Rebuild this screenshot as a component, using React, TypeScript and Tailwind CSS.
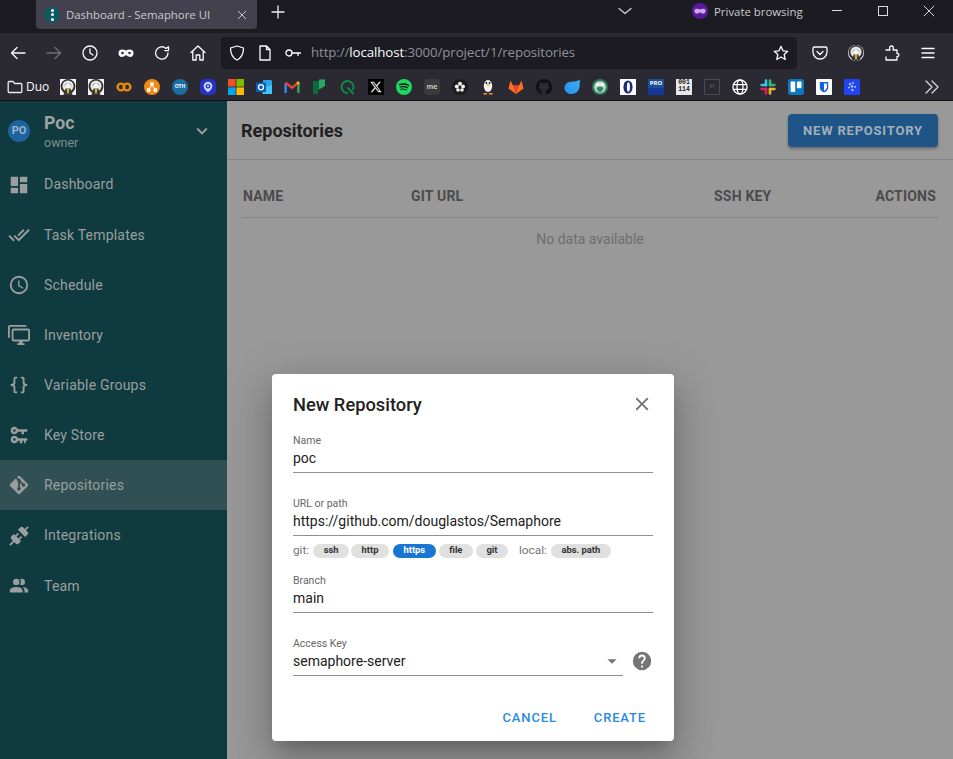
import type { ReactNode } from "react";

type NavItem = { label: string; h: number; path: string; active?: boolean; iconClass?: string };

const navItems: NavItem[] = [
  { label: "Dashboard", h: 51, path: "M13,3V9H21V3M13,21H21V11H13M3,21H11V15H3M3,13H11V3H3V13Z" },
  { label: "Task Templates", h: 50, path: "M0.41,13.41L6,19L7.41,17.58L1.83,12M22.24,5.58L11.66,16.17L7.5,12L6.07,13.41L11.66,19L23.66,7M18,7L16.59,5.58L10.24,11.93L11.66,13.34L18,7Z" },
  { label: "Schedule", h: 50, path: "M12,20A8,8 0 0,0 20,12A8,8 0 0,0 12,4A8,8 0 0,0 4,12A8,8 0 0,0 12,20M12,2A10,10 0 0,1 22,12A10,10 0 0,1 12,22C6.47,22 2,17.5 2,12A10,10 0 0,1 12,2M12.5,7V12.25L17,14.92L16.25,16.15L11,13V7H12.5Z" },
  { label: "Inventory", h: 50, path: "M22,17V7H6V17H22M22,5A2,2 0 0,1 24,7V17C24,18.11 23.1,19 22,19H16V21H18V23H10V21H12V19H6C4.89,19 4,18.11 4,17V7A2,2 0 0,1 6,5H22M2,3V15H0V3A2,2 0 0,1 2,1H20V3H2Z" },
  { label: "Variable Groups", h: 50, path: "M8,3A2,2 0 0,0 6,5V9A2,2 0 0,1 4,11H3V13H4A2,2 0 0,1 6,15V19A2,2 0 0,0 8,21H10V19H8V14A2,2 0 0,0 6,12A2,2 0 0,0 8,10V5H10V3M16,3A2,2 0 0,1 18,5V9A2,2 0 0,0 20,11H21V13H20A2,2 0 0,0 18,15V19A2,2 0 0,1 16,21H14V19H16V14A2,2 0 0,1 18,12A2,2 0 0,1 16,10V5H14V3H16Z" },
  { label: "Key Store", h: 50, iconClass: "h-5 w-5 mx-px", path: "M6.5,2C8.46,2 10.13,3.25 10.74,5H22V8H18V11H15V8H10.74C10.13,9.75 8.46,11 6.5,11C4,11 2,9 2,6.5C2,4 4,2 6.5,2M6.5,5A1.5,1.5 0 0,0 5,6.5A1.5,1.5 0 0,0 6.5,8A1.5,1.5 0 0,0 8,6.5A1.5,1.5 0 0,0 6.5,5M6.5,13C8.46,13 10.13,14.25 10.74,16H22V19H20V22H18V19H16V22H13V19H10.74C10.13,20.75 8.46,22 6.5,22C4,22 2,20 2,17.5C2,15 4,13 6.5,13M6.5,16A1.5,1.5 0 0,0 5,17.5A1.5,1.5 0 0,0 6.5,19A1.5,1.5 0 0,0 8,17.5A1.5,1.5 0 0,0 6.5,16Z" },
  { label: "Repositories", h: 50, active: true, path: "M2.6,10.59L8.38,4.8L10.07,6.5C9.83,7.35 10.22,8.28 11,8.73V14.27C10.4,14.61 10,15.26 10,16A2,2 0 0,0 12,18A2,2 0 0,0 14,16C14,15.26 13.6,14.61 13,14.27V9.41L15.07,11.5C15,11.65 15,11.82 15,12A2,2 0 0,0 17,14A2,2 0 0,0 19,12A2,2 0 0,0 17,10C16.82,10 16.65,10 16.5,10.07L13.93,7.5C14.19,6.57 13.71,5.55 12.78,5.16C12.35,5 11.9,4.96 11.5,5.07L9.8,3.38L10.59,2.6C11.37,1.81 12.63,1.81 13.41,2.6L21.4,10.59C22.19,11.37 22.19,12.63 21.4,13.41L13.41,21.4C12.63,22.19 11.37,22.19 10.59,21.4L2.6,13.41C1.81,12.63 1.81,11.37 2.6,10.59Z" },
  { label: "Integrations", h: 51, path: "M21.4 7.5C22.2 8.3 22.2 9.6 21.4 10.3L18.6 13.1L10.8 5.3L13.6 2.5C14.4 1.7 15.7 1.7 16.4 2.5L18.2 4.3L21.2 1.3L22.6 2.7L19.6 5.7L21.4 7.5M15.6 13.3L14.2 11.9L11.4 14.7L9.3 12.6L12.1 9.8L10.7 8.4L7.9 11.2L6.4 9.8L3.6 12.6C2.8 13.4 2.8 14.7 3.6 15.4L5.4 17.2L1.4 21.2L2.8 22.6L6.8 18.6L8.6 20.4C9.4 21.2 10.7 21.2 11.4 20.4L14.2 17.6L12.8 16.2L15.6 13.3Z" },
  { label: "Team", h: 50, path: "M16 17V19H2V17S2 13 9 13 16 17 16 17M12.5 7.5A3.5 3.5 0 1 0 9 11A3.5 3.5 0 0 0 12.5 7.5M15.94 13A5.32 5.32 0 0 1 18 17V19H22V17S22 13.37 15.94 13M15 4A3.39 3.39 0 0 0 13.07 4.59A5 5 0 0 1 13.07 10.41A3.39 3.39 0 0 0 15 11A3.5 3.5 0 0 0 15 4Z" },
];

function Mdi({ path, className }: { path: string; className?: string }) {
  return (
    <svg viewBox="0 0 24 24" className={className} fill="currentColor">
      <path d={path} />
    </svg>
  );
}

function Line({ children, className }: { children: ReactNode; className?: string }) {
  return (
    <svg viewBox="0 0 16 16" className={className} fill="none" stroke="currentColor" strokeWidth="1.3" strokeLinecap="round" strokeLinejoin="round">
      {children}
    </svg>
  );
}

function Penguin({ className }: { className?: string }) {
  return (
    <svg viewBox="0 0 16 16" className={className ?? "w-4 h-4"}>
      <rect width="16" height="16" fill="#f2f2f2" />
      <circle cx="8" cy="7.5" r="7.4" fill="#2e2e2e" />
      <circle cx="8" cy="7" r="5.6" fill="#e6e6e6" />
      <path d="M4.6 7.5 C4.6 3 11.4 3 11.4 7.5 L10.4 5.6 H5.6Z" fill="#222" />
      <ellipse cx="8" cy="6.6" rx="2.3" ry="2.5" fill="#f4f4f4" />
      <path d="M3.4 16 L5.6 9.6 H10.4 L12.6 16Z" fill="#3a3a3a" />
      <path d="M6.6 9.4 H9.4 L8.7 14.6 H7.3Z" fill="#d6b640" />
    </svg>
  );
}

const favicons: ReactNode[] = [
  <Penguin />,
  <Penguin />,
  <svg viewBox="0 0 16 16" className="w-4 h-4" fill="none" stroke="#e8890c" strokeWidth="2.4">
    <circle cx="5" cy="8" r="3.4" />
    <circle cx="11" cy="8" r="3.4" />
  </svg>,
  <svg viewBox="0 0 16 16" className="w-4 h-4">
    <circle cx="8" cy="8" r="8" fill="#f08a16" />
    <rect x="6.3" y="3.4" width="3.4" height="3.4" fill="#fff" />
    <rect x="3" y="9.4" width="3.4" height="3.4" fill="#fff" />
    <rect x="9.6" y="9.4" width="3.4" height="3.4" fill="#fff" />
    <path d="M8 6.5 L4.7 10 M8 6.5 L11.3 10" stroke="#fff" strokeWidth="1" />
  </svg>,
  <span className="flex w-4 h-4 items-center justify-center rounded-full bg-[#1b6ea3] text-[5px] font-bold text-white">OTH</span>,
  <svg viewBox="0 0 16 16" className="w-4 h-4">
    <rect width="16" height="16" rx="5" fill="#2433c4" />
    <path d="M8 2.8a4.4 4.4 0 0 1 4.4 4.4C12.4 10 8 13.4 8 13.4S3.6 10 3.6 7.2A4.4 4.4 0 0 1 8 2.8Z" fill="#c8cff5" />
    <circle cx="8" cy="7.2" r="2.3" fill="#2433c4" />
    <circle cx="8" cy="7.2" r="1.1" fill="#c8cff5" />
  </svg>,
  <svg viewBox="0 0 16 16" className="w-4 h-4">
    <rect width="7.6" height="7.6" fill="#f25022" />
    <rect x="8.4" width="7.6" height="7.6" fill="#7fba00" />
    <rect y="8.4" width="7.6" height="7.6" fill="#00a4ef" />
    <rect x="8.4" y="8.4" width="7.6" height="7.6" fill="#ffb900" />
  </svg>,
  <svg viewBox="0 0 16 16" className="w-4 h-4">
    <path d="M7 1 H15 L16 2 V14 L15 15 H7Z" fill="#28a8ea" />
    <path d="M8 9 L16 6 V15 H6Z" fill="#50d9ff" opacity=".65" />
    <rect y="3.5" width="10" height="9.5" rx="1" fill="#0a5fb4" />
    <circle cx="5" cy="8.2" r="2.5" fill="none" stroke="#fff" strokeWidth="1.3" />
  </svg>,
  <svg viewBox="0 0 16 16" className="w-4 h-4" fill="none" strokeWidth="2.4">
    <path d="M1.6 14 V4" stroke="#4285f4" />
    <path d="M14.4 14 V4" stroke="#34a853" />
    <path d="M1.6 3.6 L8 8.8 L14.4 3.6" stroke="#ea4335" />
    <path d="M13.2 2.8 L15 5" stroke="#fbbc04" />
  </svg>,
  <svg viewBox="0 0 16 16" className="w-4 h-4">
    <path d="M1 2 H8 V10 H6 V15 H1Z" fill="#0b6b3a" />
    <path d="M7 0.5 H13 V7 L7 10.5Z" fill="#2aa866" />
  </svg>,
  <svg viewBox="0 0 16 16" className="w-4 h-4" fill="none" stroke="#0f8a46" strokeWidth="2">
    <path d="M12.6 11.2 A6 6 0 1 0 8 14" />
    <path d="M7.5 8.5 L13.5 15" />
  </svg>,
  <svg viewBox="0 0 16 16" className="w-4 h-4">
    <rect width="16" height="16" fill="#000" />
    <g transform="translate(1.6 1.6) scale(0.53)">
      <path fill="#e8e8e8" d="M18.244 2.25h3.308l-7.227 8.26 8.502 11.24H16.17l-5.214-6.817L4.99 21.75H1.68l7.73-8.835L1.254 2.25H8.08l4.713 6.231zm-1.161 17.52h1.833L7.084 4.126H5.117z" />
    </g>
  </svg>,
  <svg viewBox="0 0 16 16" className="w-4 h-4" fill="none" stroke="#111" strokeLinecap="round">
    <circle cx="8" cy="8" r="8" fill="#1ed760" stroke="none" />
    <path d="M3.6 5.6 C6.5 4.8 9.8 5 12.4 6.4" strokeWidth="1.5" />
    <path d="M4.2 8 C6.6 7.4 9.4 7.6 11.6 8.8" strokeWidth="1.2" />
    <path d="M4.6 10.3 C6.6 9.8 8.8 10 10.6 11" strokeWidth="1" />
  </svg>,
  <span className="flex w-4 h-4 items-center justify-center rounded-[4px] bg-[#3a3a3a] text-[7px] font-bold leading-none text-[#c4c4c4]">me</span>,
  <svg viewBox="0 0 16 16" className="w-4 h-4">
    <circle cx="8" cy="8" r="8" fill="#1c1c1c" />
    <circle cx="8" cy="4.8" r="2" fill="#eee" />
    <circle cx="4.8" cy="7.6" r="2" fill="#eee" />
    <circle cx="11" cy="7.6" r="2" fill="#eee" />
    <circle cx="6" cy="11" r="1.8" fill="#eee" />
    <circle cx="10" cy="11" r="1.8" fill="#eee" />
  </svg>,
  <svg viewBox="0 0 16 16" className="w-4 h-4">
    <ellipse cx="8" cy="7" rx="4.2" ry="6" fill="#f3f3f3" />
    <circle cx="6.4" cy="4" r=".9" fill="#111" />
    <circle cx="9.6" cy="4" r=".9" fill="#111" />
    <path d="M6.2 5.6 H9.8 L8 7.4Z" fill="#f09a1a" />
    <path d="M3.4 14 H7 V15.6 H3.4Z M9 14 H12.6 V15.6 H9Z" fill="#f09a1a" />
  </svg>,
  <svg viewBox="0 0 16 16" className="w-4 h-4">
    <path d="M8 15 L0.4 9.4 L2.6 1.4 L5 6.6 H11 L13.4 1.4 L15.6 9.4Z" fill="#fc6d26" />
    <path d="M8 15 L5 6.6 H11Z" fill="#e24329" />
  </svg>,
  <svg viewBox="0 0 16 16" className="w-4 h-4">
    <path fill="#111" d="M8 0C3.58 0 0 3.58 0 8c0 3.54 2.29 6.53 5.47 7.59.4.07.55-.17.55-.38 0-.19-.01-.82-.01-1.49-2.01.37-2.53-.49-2.69-.94-.09-.23-.48-.94-.82-1.13-.28-.15-.68-.52-.01-.53.63-.01 1.08.58 1.23.82.72 1.21 1.87.87 2.33.66.07-.52.28-.87.51-1.07-1.78-.2-3.64-.89-3.64-3.95 0-.87.31-1.59.82-2.15-.08-.2-.36-1.02.08-2.12 0 0 .67-.21 2.2.82.64-.18 1.32-.27 2-.27s1.36.09 2 .27c1.53-1.04 2.2-.82 2.2-.82.44 1.1.16 1.92.08 2.12.51.56.82 1.27.82 2.15 0 3.07-1.87 3.75-3.65 3.95.29.25.54.73.54 1.48 0 1.07-.01 1.93-.01 2.2 0 .21.15.46.55.38A8.01 8.01 0 0 0 16 8c0-4.42-3.58-8-8-8z" />
  </svg>,
  <svg viewBox="0 0 16 16" className="w-4 h-4">
    <defs>
      <linearGradient id="drop" x1="0" y1="1" x2="1" y2="0">
        <stop offset="0" stopColor="#2b8be8" />
        <stop offset="1" stopColor="#37b4f0" />
      </linearGradient>
    </defs>
    <path d="M16 0.5 C15.5 5 16 8 14.5 11 C12.5 15 6.5 16.5 2.8 13.6 C-0.6 10.8 -0.2 6 3.5 3.8 C7 1.8 12 3.6 16 0.5Z" fill="url(#drop)" />
  </svg>,
  <svg viewBox="0 0 16 16" className="w-4 h-4">
    <circle cx="8" cy="8" r="8" fill="#2a7a56" />
    <circle cx="8" cy="8" r="6" fill="#b9d6c6" />
    <circle cx="6" cy="5.6" r="1.7" fill="#fff" />
    <circle cx="10" cy="5.6" r="1.7" fill="#fff" />
    <path d="M4.6 9 C6 7.4 10 7.4 11.4 9 C10.6 12 9 13 8 13 C7 13 5.4 12 4.6 9Z" fill="#2f8660" />
  </svg>,
  <svg viewBox="0 0 16 16" className="w-4 h-4">
    <rect width="16" height="16" fill="#fff" />
    <ellipse cx="8" cy="8" rx="4.6" ry="6.6" fill="#1c2a78" />
    <ellipse cx="8.4" cy="8" rx="1.5" ry="4.8" fill="#fff" />
  </svg>,
  <span className="flex flex-col w-4 h-4">
    <span className="h-[9px] bg-[#1d4f94] text-[6px] font-bold leading-[9px] text-white text-center">PRO</span>
    <span className="h-[7px] bg-[#12389a]" />
  </span>,
  <span className="flex flex-col w-4 h-4 items-center bg-[#e8e8e8] font-['Liberation_Mono',monospace] text-[6.5px] font-bold leading-[7px] text-[#222]">
    <span>001</span>
    <span>114</span>
  </span>,
  <span className="flex w-4 h-4 items-center justify-center rounded-[1px] border border-[#4c4c4c] text-[6px] font-bold text-[#4c4c4c]">#!</span>,
  <Line className="w-4 h-4 text-white">
    <circle cx="8" cy="8" r="7" />
    <ellipse cx="8" cy="8" rx="3" ry="7" />
    <path d="M1.4 5.6 H14.6 M1.4 10.4 H14.6" />
  </Line>,
  <svg viewBox="0 0 16 16" className="w-4 h-4" fill="none" strokeWidth="2.6" strokeLinecap="round">
    <path d="M6 1.6 V6.2" stroke="#36c5f0" />
    <path d="M1.6 6 H6" stroke="#36c5f0" />
    <path d="M10 1.6 V6.2" stroke="#2eb67d" />
    <path d="M10 6 H14.4" stroke="#2eb67d" />
    <path d="M10 10 V14.4" stroke="#ecb22e" />
    <path d="M10 10 H14.4" stroke="#ecb22e" />
    <path d="M6 10 V14.4" stroke="#e01e5a" />
    <path d="M1.6 10 H6" stroke="#e01e5a" />
  </svg>,
  <svg viewBox="0 0 16 16" className="w-4 h-4">
    <rect width="16" height="16" rx="2.5" fill="#0a79bf" />
    <rect x="2.6" y="2.6" width="4.6" height="10.4" rx=".8" fill="#fff" />
    <rect x="8.9" y="2.6" width="4.6" height="6.6" rx=".8" fill="#fff" />
  </svg>,
  <svg viewBox="0 0 16 16" className="w-4 h-4">
    <rect width="16" height="16" rx="1" fill="#fff" />
    <path d="M3.8 3 H12.2 V8.4 C12.2 11 9.8 12.6 8 13.4 C6.2 12.6 3.8 11 3.8 8.4Z" fill="#175ddc" />
    <path d="M8 4.4 H10.9 V8.3 C10.9 9.9 9.3 11.1 8 11.8Z" fill="#fff" />
  </svg>,
  <svg viewBox="0 0 16 16" className="w-4 h-4">
    <rect width="16" height="16" rx="1.5" fill="#2244f0" />
    <g fill="#a9bcff">
      <circle cx="6" cy="5" r="1.2" />
      <circle cx="9" cy="4" r="1" />
      <circle cx="8" cy="7.4" r="1.3" />
      <circle cx="5" cy="8.5" r="1" />
      <circle cx="11" cy="7.8" r="1.1" />
      <circle cx="8.4" cy="11" r="1.2" />
    </g>
  </svg>,
];

function Field({ label, value, className, children }: { label: string; value: string; className?: string; children?: ReactNode }) {
  return (
    <div className={className}>
      <div className="h-[15px] text-[10.5px] leading-[15px] text-[#666]">{label}</div>
      <div className="h-[25px] border-b border-[#8f8f8f] text-[14px] leading-[21px] text-[#212121]">{value}</div>
      {children}
    </div>
  );
}

function Chip({ label, active, className }: { label: string; active?: boolean; className?: string }) {
  return (
    <span className={`flex h-[14px] items-center rounded-full px-[10.5px] text-[9.4px] font-bold ${active ? "bg-[#1976d2] text-white" : "bg-[#e0e0e0] text-[#333]"} ${className ?? ""}`}>
      {label}
    </span>
  );
}

function BrowserChrome() {
  return (
    <div className="shrink-0 font-['Open_Sans',sans-serif]">
      <div className="flex h-[33px] items-start bg-[#1c1b22] text-[#d3d3d6]">
        <div className="ml-9 flex h-[29px] w-[221px] items-center rounded-b-[4px] bg-[#42414d] pl-2 pr-2">
          <span className="flex h-4 w-4 flex-col items-center justify-center gap-[1.5px] rounded-full bg-[#0f5a60]">
            <i className="h-[3px] w-[3px] rounded-full bg-white" />
            <i className="h-[3px] w-[3px] rounded-full bg-white" />
            <i className="h-[3px] w-[3px] rounded-full bg-white" />
          </span>
          <span className="ml-[6px] text-[11.4px] text-[#c9c9ce]">Dashboard - Semaphore UI</span>
          <Line className="ml-auto mr-[1px] h-3 w-3 text-[#c9c9ce]">
            <path d="M3 3 L13 13 M13 3 L3 13" />
          </Line>
        </div>
        <Line className="ml-[13px] mt-[4px] h-4 w-4 text-[#eee]">
          <path d="M8 2 V14 M2 8 H14" />
        </Line>
        <Line className="ml-[331px] mt-[3px] h-4 w-4 text-[#ccc]">
          <path d="M2 5.5 L8 10.5 L14 5.5" />
        </Line>
        <svg viewBox="0 0 16 16" className="ml-[59px] mt-[3px] h-4 w-4">
          <circle cx="8" cy="8" r="8" fill="#5b1a9c" />
          <path d="M2.5 6.5 C4.5 5 6.8 6.2 8 6.6 C9.2 6.2 11.5 5 13.5 6.5 C14 9 12.8 11 10.8 10.6 C9.5 10.4 9 9.4 8 9.4 C7 9.4 6.5 10.4 5.2 10.6 C3.2 11 2 9 2.5 6.5Z" fill="#c7a6ee" />
        </svg>
        <span className="ml-[6px] mt-[3px] w-[88px] whitespace-nowrap text-[11.4px] leading-[18px] text-[#c9c9ce]">Private browsing</span>
        <span className="ml-[30px] mt-[10px] h-px w-[10px] bg-[#ddd]" />
        <span className="ml-[36px] mt-[6px] h-[10px] w-[10px] border border-[#ddd]" />
        <Line className="ml-[35px] mt-[5px] h-3 w-3 text-[#ddd]">
          <path d="M1.5 1.5 L14.5 14.5 M14.5 1.5 L1.5 14.5" />
        </Line>
      </div>
      <div className="flex h-[40px] items-center bg-[#2b2a33] text-[#fbfbfe]">
        <Line className="ml-[10px] h-4 w-4">
          <path d="M15 8 H1.5 M7 2.5 L1.5 8 L7 13.5" />
        </Line>
        <Line className="ml-[20px] h-4 w-4 text-[#6f6e76]">
          <path d="M1 8 H14.5 M9 2.5 L14.5 8 L9 13.5" />
        </Line>
        <Line className="ml-[20px] h-4 w-4">
          <circle cx="8" cy="8" r="7" />
          <path d="M8 4 V8 L11 10" />
        </Line>
        <svg viewBox="0 0 16 16" className="ml-[20px] h-4 w-4" fill="#fbfbfe" fillRule="evenodd">
          <path d="M0.5 7.5 C1 3.8 5 3.8 8 5.6 C11 3.8 15 3.8 15.5 7.5 C16 11 13 13 10.5 11.6 C9.3 10.9 8.6 10.2 8 10.2 C7.4 10.2 6.7 10.9 5.5 11.6 C3 13 0 11 0.5 7.5Z M3.2 8 A1.3 1.3 0 0 0 5.8 8 A1.3 1.3 0 0 0 3.2 8Z M10.2 8 A1.3 1.3 0 0 0 12.8 8 A1.3 1.3 0 0 0 10.2 8Z" />
        </svg>
        <Line className="ml-[20px] h-4 w-4">
          <path d="M14 8 A6.2 6.2 0 1 1 12 3.4 L14.5 1.8 V5.6 H10.8" />
        </Line>
        <Line className="ml-[20px] h-4 w-4">
          <path d="M1 7.5 L8 1 L15 7.5 M2.8 6 V15 H6.2 V10 H9.8 V15 H13.2 V6" />
        </Line>
        <div className="ml-[15px] flex h-8 w-[576px] items-center rounded-[4px] bg-[#1c1b22] pl-2 pr-[8px]">
          <Line className="h-4 w-4">
            <path d="M8 1 L14.5 3 C14.5 8 13 12.5 8 15 C3 12.5 1.5 8 1.5 3Z" />
          </Line>
          <Line className="ml-[12px] h-4 w-4">
            <path d="M3 1 H9.5 L13 4.5 V15 H3Z M9.5 1 V4.5 H13" />
          </Line>
          <Line className="ml-[12px] h-4 w-4">
            <circle cx="4" cy="8" r="3" />
            <path d="M7 8 H15.5 M13 8 V10.5" />
          </Line>
          <span className="ml-[10px] text-[13.3px] tracking-[-0.1px] text-[#8f8f99]">
            http://<span className="text-[#fbfbfe]">localhost</span>:3000/project/1/repositories
          </span>
          <Line className="ml-auto h-4 w-4">
            <path d="M8 1.3 L10 5.8 L14.8 6.3 L11.2 9.6 L12.2 14.5 L8 12 L3.8 14.5 L4.8 9.6 L1.2 6.3 L6 5.8Z" />
          </Line>
        </div>
        <Line className="ml-[15px] h-4 w-4">
          <path d="M2.5 2 H13.5 A1.5 1.5 0 0 1 15 3.5 V7 A7 7 0 0 1 1 7 V3.5 A1.5 1.5 0 0 1 2.5 2Z M5 6.5 L8 9.5 L11 6.5" />
        </Line>
        <span className="ml-[20px] h-4 w-4 overflow-hidden rounded-full">
          <Penguin />
        </span>
        <Line className="ml-[20px] h-4 w-4">
          <path d="M2 5 H6 C5 2.5 6 1 7.5 1 C9 1 10 2.5 9 5 H13 V8.5 C15.5 7.8 15.5 12 13 11.5 V15 H2 V12" />
        </Line>
        <Line className="ml-[20px] h-4 w-4">
          <path d="M2 3.5 H14 M2 8 H14 M2 12.5 H14" />
        </Line>
      </div>
      <div className="flex h-[27px] items-center bg-[#2b2a33]">
        <Line className="ml-[7px] h-4 w-4 text-[#ececec]">
          <path d="M1.2 3.5 A1 1 0 0 1 2.2 2.5 H6 L7.8 4.5 H13.8 A1 1 0 0 1 14.8 5.5 V12.5 A1 1 0 0 1 13.8 13.5 H2.2 A1 1 0 0 1 1.2 12.5Z" />
        </Line>
        <span className="ml-[3px] w-[26px] text-[12px] text-[#fbfbfe]">Duo</span>
        <div className="ml-[8px] flex items-center gap-3">
          {favicons.map((icon, i) => (
            <span key={i} className="h-4 w-4 shrink-0">
              {icon}
            </span>
          ))}
        </div>
        <Line className="ml-auto mr-[13px] h-4 w-4 text-[#d8d8d8]">
          <path d="M2 2 L8 8 L2 14 M8 2 L14 8 L8 14" />
        </Line>
      </div>
    </div>
  );
}

function Sidebar() {
  return (
    <aside className="w-[227px] shrink-0 bg-[#0f3b40] text-[#9a9e9e]">
      <div className="flex h-[58px] items-start">
        <div className="ml-2 mt-[19px] flex h-[22px] w-[22px] items-center justify-center rounded-full bg-[#1d639f] text-[11px] font-bold text-[#9ab4c9]">PO</div>
        <div className="ml-[14px] mt-[10px]">
          <div className="text-[17.6px] font-bold leading-[24px] text-[#a0a3a3]">Poc</div>
          <div className="text-[12.5px] leading-[16px] text-[#7e8e8f]">owner</div>
        </div>
        <Mdi path="M7.41,8.58L12,13.17L16.59,8.58L18,10L12,16L6,10L7.41,8.58Z" className="ml-auto mr-[14px] mt-[19px] h-[22px] w-[22px]" />
      </div>
      {navItems.map((item) => (
        <div key={item.label} className={`flex items-center pl-2 ${item.active ? "bg-[#305053]" : ""}`} style={{ height: item.h }}>
          <Mdi path={item.path} className={`shrink-0 ${item.iconClass ?? "h-[22px] w-[22px]"}`} />
          <span className="ml-[14px] text-[14px] tracking-[0.2px]">{item.label}</span>
        </div>
      ))}
    </aside>
  );
}

function Content() {
  return (
    <main className="flex-1 bg-[#999999]">
      <div className="flex h-[59px] items-center border-b border-[#858585] pl-[14px] pr-[15px]">
        <h1 className="text-[18px] font-bold text-[#1f1f1f]">Repositories</h1>
        <button className="ml-auto mt-px flex h-[33px] w-[150px] items-center justify-center rounded-[4px] bg-[#1f5487] text-[13px] font-bold tracking-[0.8px] text-[#a3aeb9] shadow-[0_2px_3px_rgba(0,0,0,0.3)]">
          NEW REPOSITORY
        </button>
      </div>
      <div className="mx-[14px] mt-[16px]">
        <div className="grid h-[42px] grid-cols-[168px_303px_1fr_auto] items-center border-b border-[#858585] pl-[2px] pr-[3px] text-[14px] font-bold tracking-[0.2px] text-[#4b4b4b]">
          <span>NAME</span>
          <span>GIT URL</span>
          <span>SSH KEY</span>
          <span>ACTIONS</span>
        </div>
        <div className="h-[42px] text-center text-[14px] leading-[42px] text-[#6e6e6e]">No data available</div>
      </div>
    </main>
  );
}

function Dialog() {
  return (
    <div className="absolute left-[272px] top-[374px] h-[367px] w-[402px] rounded-[4px] bg-white px-[21px] shadow-[0_11px_15px_-7px_rgba(0,0,0,0.2),0_24px_38px_3px_rgba(0,0,0,0.14),0_9px_46px_8px_rgba(0,0,0,0.12)]">
      <div className="flex h-[60px] items-center pt-[2px]">
        <h2 className="text-[18.3px] font-medium text-[#212121]">New Repository</h2>
        <Mdi path="M19,6.41L17.59,5L12,10.59L6.41,5L5,6.41L10.59,12L5,17.59L6.41,19L12,13.41L17.59,19L19,17.59L13.41,12L19,6.41Z" className="ml-auto mb-[2px] h-[22px] w-[22px] text-[#757575]" />
      </div>
      <Field label="Name" value="poc" className="-mt-px" />
      <Field label="URL or path" value="https://github.com/douglastos/Semaphore" className="mt-[23px]" />
      <div className="mt-[7px] flex h-[15px] items-center text-[11.8px] text-[#757575]">
        <span>git:</span>
        <Chip label="ssh" className="ml-1" />
        <Chip label="http" className="ml-[2px]" />
        <Chip label="https" active className="ml-1" />
        <Chip label="file" className="ml-[3px]" />
        <Chip label="git" className="ml-[3px]" />
        <span className="ml-[11px]">local:</span>
        <Chip label="abs. path" className="ml-1" />
      </div>
      <Field label="Branch" value="main" className="mt-[15px]" />
      <div className="mt-[23px] flex items-start">
        <Field label="Access Key" value="semaphore-server" className="relative w-[330px]">
          <Mdi path="M7,10L12,15L17,10H7Z" className="absolute right-0 top-[14px] h-[22px] w-[22px] text-[#757575]" />
        </Field>
        <Mdi path="M15.07,11.25L14.17,12.17C13.45,12.89 13,13.5 13,15H11V14.5C11,13.39 11.45,12.39 12.17,11.67L13.41,10.41C13.78,10.05 14,9.55 14,9C14,7.89 13.1,7 12,7A2,2 0 0,0 10,9H8A4,4 0 0,1 12,5A4,4 0 0,1 16,9C16,9.88 15.64,10.67 15.07,11.25M13,19H11V17H13M12,2A10,10 0 0,0 2,12A10,10 0 0,0 12,22A10,10 0 0,0 22,12C22,6.47 17.5,2 12,2Z" className="ml-[8px] mt-[14px] h-[22px] w-[22px] text-[#757575]" />
      </div>
      <div className="mt-[32px] flex justify-end gap-[37px] pr-[7px] text-[13px] font-medium tracking-[0.85px] text-[#2a8ae0]">
        <span>CANCEL</span>
        <span>CREATE</span>
      </div>
    </div>
  );
}

export default function App() {
  return (
    <div className="relative flex h-[759px] w-[953px] flex-col overflow-hidden font-['Roboto',sans-serif]">
      <BrowserChrome />
      <div className="flex flex-1 border-t border-[#111]">
        <Sidebar />
        <Content />
      </div>
      <Dialog />
    </div>
  );
}
